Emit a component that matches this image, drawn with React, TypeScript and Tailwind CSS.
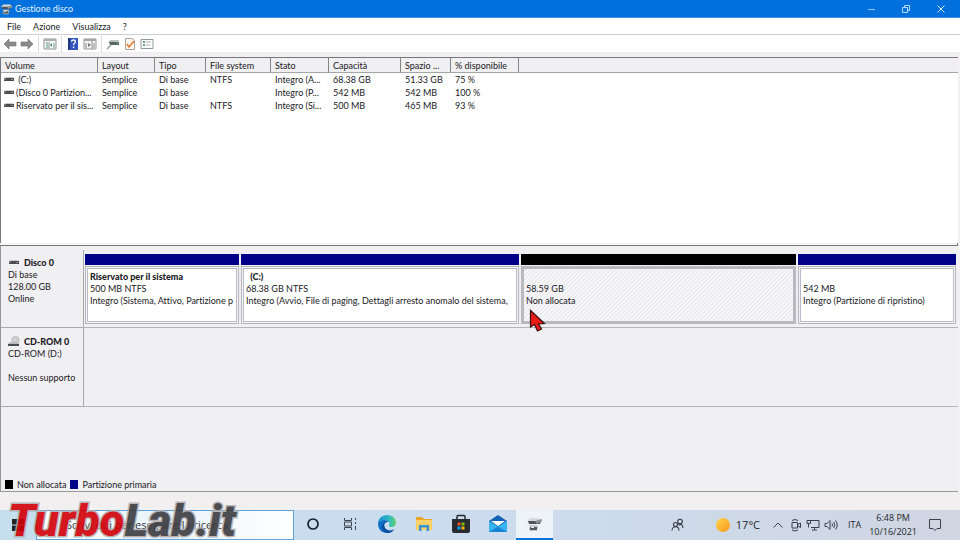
import { clsx } from "clsx";
import type { ReactNode } from "react";

interface Volume {
  name: string;
  fs: string;
  status: string;
  capacity: string;
  free: string;
  percent: string;
}

interface PartitionProps {
  title?: string;
  size: string;
  status: string;
  className: string;
  unallocated?: boolean;
}

const volumes: Volume[] = [
  { name: " (C:)", fs: "NTFS", status: "Integro (A...", capacity: "68.38 GB", free: "51.33 GB", percent: "75 %" },
  { name: "(Disco 0 Partizion...", fs: "", status: "Integro (P...", capacity: "542 MB", free: "542 MB", percent: "100 %" },
  { name: "Riservato per il sis...", fs: "NTFS", status: "Integro (Si...", capacity: "500 MB", free: "465 MB", percent: "93 %" },
];

const columns = [
  { label: "Volume", width: "w-[97px]" },
  { label: "Layout", width: "w-[57px]" },
  { label: "Tipo", width: "w-[51px]" },
  { label: "File system", width: "w-[65px]" },
  { label: "Stato", width: "w-[58px]" },
  { label: "Capacità", width: "w-[72px]" },
  { label: "Spazio ...", width: "w-[50px]" },
  { label: "% disponibile", width: "w-[68px]" },
];

function DriveIcon() {
  return (
    <svg className="h-2 w-3 shrink-0" viewBox="0 0 12 8" aria-hidden="true">
      <path d="M2 1h8l1 2H1z" fill="#c9c9cb" />
      <rect x="1" y="2" width="10" height="3" fill="#4b4b50" />
      <rect x="1" y="2" width="2" height="2" fill="#7a7a7e" />
      <rect x="8" y="3" width="2" height="1" fill="#8d9a93" />
    </svg>
  );
}

function CdIcon() {
  return (
    <svg className="h-3 w-3 shrink-0" viewBox="0 0 12 12" aria-hidden="true">
      <circle cx="7.500" cy="4" r="3.600" fill="#d8d8da" stroke="#a9a9ac" strokeWidth=".8" />
      <circle cx="7.500" cy="4" r="1.2" fill="#f4f4f4" stroke="#999" strokeWidth=".6" />
      <path d="M2 6h8l1 2H0z" fill="#bbb" />
      <rect y="8" width="11" height="2" fill="#4b4b50" />
    </svg>
  );
}

function DiskManagementIcon({ className }: { className?: string }) {
  return (
    <svg className={className} viewBox="0 0 16 16" aria-hidden="true">
      <path d="M3 2h9l3 3-2 2H2L0 5z" fill="#d7d9da" />
      <path d="M1 5h13l-1 3H2z" fill="#4d5358" />
      <path d="M8 5l7-2v2l-5 3z" fill="#8c9295" />
      <path d="M3 9h7l1 2-1 4H3L2 13z" fill="#c5c9cb" />
      <path d="M3 11h7v3H3z" fill="#51575b" />
      <path d="M4 11h3v1H4z" fill="#eee" />
    </svg>
  );
}

function ToolButton({ label, children }: { label: string; children: ReactNode }) {
  return (
    <button type="button" aria-label={label} className="flex h-4 w-[17px] items-center justify-center">
      <svg className="h-3 w-3.5" viewBox="0 0 14 12">
        {children}
      </svg>
    </button>
  );
}

function ToolSeparator() {
  return <span className="ml-[3px] mr-0.5 h-4 w-px bg-[#dcdcdc]" />;
}

function Toolbar() {
  return (
    <div className="flex h-[18px] items-center border-b border-[#eeeef0] bg-white pl-px">
      <ToolButton label="Indietro">
        <path d="M1 6l5-5v3h7v4H6v3z" fill="#8a8a8a" stroke="#6f6f6f" strokeWidth=".6" />
      </ToolButton>
      <ToolButton label="Avanti">
        <path d="M13 6L8 1v3H1v4h7v3z" fill="#8a8a8a" stroke="#6f6f6f" strokeWidth=".6" />
      </ToolButton>
      <ToolSeparator />
      <ToolButton label="Mostra struttura">
        <path d="M1 1h12v10H1z" fill="#f4f6f5" stroke="#8d9692" />
        <path d="M1 1h12v2H1z" fill="#a9b1ad" />
        <path d="M3 5h2M3 7h2M3 9h2" stroke="#5a9a8b" />
        <path d="M6 4v6M11 5v5" stroke="#87918d" />
        <path d="M7 7l2-2v4z" fill="#45927f" />
      </ToolButton>
      <ToolSeparator />
      <ToolButton label="Guida">
        <path d="M2 0h10v12H2z" fill="#3455bd" />
        <path d="M2 0h2v12H2z" fill="#203583" />
        <path d="M5.500 3.500c0-2 4-2 4 0 0 1.500-2 1.500-2 3.500M7.500 8.500V10" fill="none" stroke="#fff" strokeWidth="1.300" />
      </ToolButton>
      <ToolButton label="Mostra riquadro azioni">
        <path d="M1 1h12v10H1z" fill="#f3f3f3" stroke="#969696" />
        <path d="M1 1h12v2H1z" fill="#a6a6a6" />
        <path d="M9 3v8M3 5v5M11 5v5" stroke="#8c8c8c" />
        <path d="M5 5l3 2-3 2z" fill="#777" />
      </ToolButton>
      <ToolSeparator />
      <ToolButton label="Aggiorna">
        <path d="M4 2h9l-1 3H2z" fill="#bac0be" />
        <path d="M3 4h10v3H4z" fill="#56665f" />
        <path d="M5 7l-4 4" stroke="#929b97" strokeWidth="1.500" />
        <path d="M10 5h2" stroke="#58ae88" />
      </ToolButton>
      <ToolButton label="Proprietà">
        <path d="M2.500.5h7l2 2v9h-9z" fill="#fff5eb" stroke="#a9a39f" />
        <path d="M4 6l2 3 5-6" fill="none" stroke="#df7d34" strokeWidth="1.500" />
      </ToolButton>
      <ToolButton label="Elenco">
        <path d="M1 1.500h12v9H1z" fill="#fff" stroke="#8f9999" />
        <path d="M3 4h2M3 7h2" stroke="#377c76" strokeWidth="1.300" />
        <path d="M6 4h5M6 7h4" stroke="#a4adb0" />
      </ToolButton>
    </div>
  );
}

function VolumeTable() {
  return (
    <section className="h-[186px] overflow-hidden border-l border-t border-[#77777b] bg-white">
      <table className="w-full table-fixed border-separate border-spacing-0 text-left">
        <thead className="bg-[#f0eff1]">
          <tr className="h-[15px]">
            {columns.map((c) => (
              <th
                key={c.label}
                scope="col"
                className={clsx("border-b border-r border-b-[#a5a5a9] border-r-[#85858a] p-0 pl-1 pt-px font-normal leading-[13px]", c.width)}
              >
                {c.label}
              </th>
            ))}
            <td className="border-b border-[#a5a5a9] p-0" />
          </tr>
        </thead>
        <tbody>
          {volumes.map((v) => (
            <tr key={v.name} className="h-[13px] leading-[13px] whitespace-pre">
              <td className="p-0">
                <div className="flex items-center gap-px pl-0.5">
                  <DriveIcon />
                  {v.name}
                </div>
              </td>
              <td className="p-0 pl-1">Semplice</td>
              <td className="p-0 pl-1">Di base</td>
              <td className="p-0 pl-1">{v.fs}</td>
              <td className="p-0 pl-1">{v.status}</td>
              <td className="p-0 pl-1">{v.capacity}</td>
              <td className="p-0 pl-1">{v.free}</td>
              <td className="p-0 pl-1">{v.percent}</td>
            </tr>
          ))}
        </tbody>
      </table>
    </section>
  );
}

function Partition({ title, size, status, className, unallocated }: PartitionProps) {
  return (
    <div className={clsx("flex min-w-0 flex-col", className)}>
      <div className={clsx("h-[11px]", unallocated ? "bg-black" : "bg-[#000089]")} />
      <div
        className={clsx(
          "mt-px flex-1 whitespace-nowrap leading-3",
          unallocated
            ? "border-[3px] border-[#b9b9bf] bg-[repeating-linear-gradient(135deg,#f8f7fa_0px,#f8f7fa_1px,#e5e4e9_2px,#f8f7fa_3px)] pl-0.5 pt-0.5"
            : "border border-[#b5b5bd] bg-[#f4f3f6] p-px"
        )}
      >
        <div className={clsx("h-full overflow-hidden", !unallocated && "border border-[#b9bccb] bg-white pl-0.5 pt-0.5")}>
          <div className="h-3 whitespace-pre font-black">{title}</div>
          <div>{size}</div>
          <div>{status}</div>
        </div>
      </div>
    </div>
  );
}

function DiskPane() {
  return (
    <section className="flex flex-1 flex-col border-b border-l border-[#97979b] bg-[#f0eff2] pt-1">
      <div className="flex h-[78px]">
        <div className="w-[83px] shrink-0 border-b border-r border-[#a9a9ae] pl-[7px] pt-[7px] leading-3">
          <div className="flex items-center gap-1 font-black"><DriveIcon />Disco 0</div>
          <div>Di base</div>
          <div>128.00 GB</div>
          <div>Online</div>
        </div>
        <div className="flex min-w-0 flex-1 gap-0.5 border-b border-[#b4b4b9] pb-[3px] pl-px pr-0.5 pt-1">
          <Partition className="flex-[154]" title="Riservato per il sistema" size="500 MB NTFS" status="Integro (Sistema, Attivo, Partizione p" />
          <Partition className="flex-[278]" title="  (C:)" size="68.38 GB NTFS" status="Integro (Avvio, File di paging, Dettagli arresto anomalo del sistema," />
          <Partition className="flex-[275]" size="58.59 GB" status="Non allocata" unallocated />
          <Partition className="flex-[158]" size="542 MB" status="Integro (Partizione di ripristino)" />
        </div>
      </div>
      <div className="flex h-[79px]">
        <div className="w-[83px] shrink-0 border-b border-r border-[#a9a9ae] pl-[7px] pt-2 leading-3">
          <div className="flex items-center gap-1 font-black"><CdIcon />CD-ROM 0</div>
          <div>CD-ROM (D:)</div>
          <div className="mt-3">Nessun supporto</div>
        </div>
        <div className="flex-1 border-b border-[#b4b4b9]" />
      </div>
      <div className="mt-auto flex h-[13px] items-center gap-1 pl-1">
        <span className="h-[9px] w-2 bg-black" />
        Non allocata
        <span className="h-[9px] w-2 bg-[#000089]" />
        Partizione primaria
      </div>
    </section>
  );
}

function TaskButton({ label, active, children }: { label: string; active?: boolean; children: ReactNode }) {
  return (
    <button
      type="button"
      aria-label={label}
      className={clsx("flex w-[37px] items-center justify-center border-b-2", active ? "border-[#0875d8] bg-[#edf3f9]" : "border-transparent")}
    >
      {children}
    </button>
  );
}

function Taskbar() {
  return (
    <footer className="flex h-[30px] items-stretch bg-linear-to-r from-[#c5dfef] via-[#ccdcee] to-[#d0d6e2] font-['Open_Sans','Noto_Sans',sans-serif] text-[#23262c]">
      <button type="button" aria-label="Start" className="flex w-9 items-center justify-center">
        <svg className="h-3 w-3" viewBox="0 0 12 12" fill="#222">
          <path d="M0 0h5.500v5.500H0zM6.500 0H12v5.500H6.500zM0 6.500h5.500V12H0zM6.500 6.500H12V12H6.500z" />
        </svg>
      </button>
      <label className="flex w-[258px] items-center border border-[#5ba2db] bg-linear-to-r from-white via-[#e8f3fa] to-white pl-[29px]">
        <input
          aria-label="Cerca"
          placeholder="Scrivi qui per eseguire la ricerca"
          className="w-full bg-transparent text-[11px] leading-4 outline-none placeholder:text-[#333]"
        />
      </label>
      <TaskButton label="Cortana">
        <svg className="h-3.5 w-3.5" viewBox="0 0 14 14">
          <circle cx="7" cy="7" r="5" fill="none" stroke="#17202d" strokeWidth="1.700" />
        </svg>
      </TaskButton>
      <TaskButton label="Visualizzazione attività">
        <svg className="h-3.5 w-3.5" viewBox="0 0 14 14" fill="none" stroke="#3c4550">
          <path d="M1.500 1v2.500h7V1M1.500 13v-2.500h7V13M1.500 5v4M8.500 5v4M1.500 5h7v4h-7M12.500 1v2M12.500 5v2M12.500 9v4" />
        </svg>
      </TaskButton>
      <TaskButton label="Edge">
        <svg className="h-5 w-5" viewBox="0 0 20 20">
          <defs>
            <linearGradient id="edgeTop" x1="0" x2="1">
              <stop offset="0" stopColor="#168fd8" />
              <stop offset=".6" stopColor="#2eb9c4" />
              <stop offset="1" stopColor="#65d36c" />
            </linearGradient>
          </defs>
          <path d="M1 10C1 4.500 5 1 10 1c5.500 0 9 3.700 9 7.500 0 3-2 4.500-4.500 4.500-2 0-3-.8-2.500-1.800C13.500 8.500 11 6 7.500 6 4 6 1.500 8 1 10z" fill="url(#edgeTop)" />
          <path d="M1 10c.5-2.500 3.500-4 6.500-4 2 0 3.500.8 4.200 2C8 7.500 6.500 10 7.500 13c1 3 5 5 9.500 2.500C15.500 18 13 19 10 19c-5.500 0-9-4-9-9z" fill="#126fc6" />
          <path d="M11.700 8C8 7.500 6.500 10 7.500 13c1 3 5 5 9.500 2.500-1.500 2.500-4 3.500-7 3.500-3.500-1-6-4-5-7.500C5.700 8.700 9 7 11.700 8z" fill="#0c4e9c" />
        </svg>
      </TaskButton>
      <TaskButton label="Esplora file">
        <svg className="h-4 w-[18px]" viewBox="0 0 18 16">
          <path d="M1 1h6l2 2h8v4H1z" fill="#e8a52b" />
          <path d="M1 4h16v10H1z" fill="#fbd066" />
          <path d="M4 15V9h10v6h-2.500v-3.500h-5V15z" fill="#3d91d1" />
        </svg>
      </TaskButton>
      <TaskButton label="Microsoft Store">
        <svg className="h-5 w-5" viewBox="0 0 20 20">
          <path d="M6 6V2.500Q6 1.500 7 1.500h6q1 0 1 1V6" fill="none" stroke="#232a33" strokeWidth="1.500" />
          <path d="M1 5h18v12q0 2-2 2H3q-2 0-2-2z" fill="#282b30" />
          <path d="M6.500 8.500h3v3h-3z" fill="#f25022" />
          <path d="M10.500 8.500h3v3h-3z" fill="#7fba00" />
          <path d="M6.500 12.500h3v3h-3z" fill="#00a4ef" />
          <path d="M10.500 12.500h3v3h-3z" fill="#ffb900" />
        </svg>
      </TaskButton>
      <TaskButton label="Posta">
        <svg className="h-[18px] w-[18px]" viewBox="0 0 18 18">
          <path d="M0 6l9-6 9 6v11H0z" fill="#1263b5" />
          <path d="M0 6l9 5.500L18 6v11H0z" fill="#37b4f0" />
          <path d="M0 17l9-5.500L18 17z" fill="#1784d8" />
          <path d="M2 6h14l-7 5z" fill="#fff" />
        </svg>
      </TaskButton>
      <TaskButton label="Gestione disco" active>
        <DiskManagementIcon className="h-4 w-4" />
      </TaskButton>
      <div className="ml-auto flex items-center pr-[18px]">
        <button type="button" aria-label="Contatti" className="mr-[30px]">
          <svg className="h-3.5 w-3.5" viewBox="0 0 14 14" fill="none" stroke="#343b45" strokeWidth="1.100">
            <circle cx="4.500" cy="6.500" r="2" />
            <path d="M1 12.500c0-5 7-5 7 0" />
            <circle cx="9" cy="3.500" r="2.300" />
            <path d="M7.500 7c2-1.500 4.500 0 4.500 3" />
          </svg>
        </button>
        <button type="button" className="flex items-center gap-[5px] text-[11px]">
          <svg className="h-4 w-4" viewBox="0 0 16 16" aria-hidden="true">
            <defs>
              <linearGradient id="sun" x1="0" y1="0" x2="1" y2="1">
                <stop offset="0" stopColor="#ffd34c" />
                <stop offset="1" stopColor="#f89818" />
              </linearGradient>
            </defs>
            <circle cx="8" cy="8" r="7" fill="url(#sun)" />
          </svg>
          17°C
        </button>
        <button type="button" aria-label="Mostra icone nascoste" className="ml-3">
          <svg className="h-3 w-3" viewBox="0 0 12 12" fill="none" stroke="#3a414b">
            <path d="M1.500 8.500L6 4l4.500 4.500" />
          </svg>
        </button>
        <svg className="ml-1.5 h-3.5 w-3" viewBox="0 0 12 14" fill="none" stroke="#3a414b" aria-hidden="true">
          <path d="M2 4.500h5.500v5.500H2zM8 6.500l2.500-1.500v4.500L8 8M2 2.500q3-2 6 0M2 12q3 2 6 0" />
        </svg>
        <svg className="ml-1 h-3.5 w-3.5" viewBox="0 0 14 14" fill="none" stroke="#3a414b" aria-hidden="true">
          <path d="M4 2.500h9v7H5M8.500 9.500v2M6 12h5M1 2.500h3.500v3H1zM2.500 5.500v4" />
        </svg>
        <svg className="ml-1 h-3.5 w-3.5" viewBox="0 0 14 14" fill="none" stroke="#3a414b" aria-hidden="true">
          <path d="M1 5.500h2l3-3v9l-3-3H1zM8 5.500q1.200 1.500 0 3M9.700 4q2.300 3 0 6M11.500 2.500q3.500 4.500 0 9" />
        </svg>
        <span className="ml-2.5 text-[9px]">ITA</span>
        <div className="ml-2 text-center text-[9px] leading-[14px]">
          <div>6:48 PM</div>
          <div>10/16/2021</div>
        </div>
        <button type="button" aria-label="Notifiche" className="ml-[11px]">
          <svg className="h-3.5 w-3.5" viewBox="0 0 14 14" fill="none" stroke="#3a414b">
            <path d="M1.500 1.500h11v9H9L7 12.500 5 10.500H1.500z" />
          </svg>
        </button>
      </div>
    </footer>
  );
}

export default function App() {
  return (
    <div className="relative flex min-h-screen flex-col overflow-hidden bg-[#f2f0f2] font-['Lato','Open_Sans',sans-serif] text-[9px] text-[#202024] [font-variant-ligatures:none]">
      <header className="flex h-[18px] items-center border-b border-[#3a93e6] bg-[#0070dc] pl-px text-[#e4f1ff]">
        <DiskManagementIcon className="h-3 w-3" />
        <h1 className="ml-0.5 pt-px">Gestione disco</h1>
        <div className="ml-auto flex items-center gap-[21px] pr-3">
          <button type="button" aria-label="Riduci a icona">
            <svg className="h-3.5 w-3.5" viewBox="0 0 14 14" stroke="#8bc6ff"><path d="M4 7.500h7" /></svg>
          </button>
          <button type="button" aria-label="Ripristina">
            <svg className="h-3.5 w-3.5" viewBox="0 0 14 14" fill="none" stroke="#b5dbff">
              <path d="M3.500 5.500h5v5h-5zM5.500 5V3.500h5v5H9" />
            </svg>
          </button>
          <button type="button" aria-label="Chiudi">
            <svg className="h-3.5 w-3.5" viewBox="0 0 14 14" stroke="#d3eaff"><path d="M3.500 3.500l7 7M10.500 3.500l-7 7" /></svg>
          </button>
        </div>
      </header>

      <nav className="flex h-[17px] items-center gap-3 border-b border-[#cfcfd1] bg-white pl-[7px] pt-px">
        <button type="button">File</button>
        <button type="button">Azione</button>
        <button type="button">Visualizza</button>
        <button type="button">?</button>
      </nav>
      <Toolbar />

      <main className="mr-0.5 flex flex-1 flex-col pt-1">
        <VolumeTable />
        <div className="h-[3px] shrink-0 border-b border-r border-[#77777b] bg-[#f5f4f6]" />
        <DiskPane />
      </main>
      <div className="h-[18px] bg-[#f2eff1]" />
      <Taskbar />

      {/* Mouse pointer */}
      <svg className="absolute left-[529px] top-[309px] h-[23px] w-[18px]" viewBox="0 0 18 23" aria-hidden="true">
        <path d="M1.500 1.500v16.500l4-2.500 3 6.500 4-2-3-5 6-.5z" fill="#ea1c18" stroke="#37100f" strokeWidth="1.200" />
      </svg>

      {/* Site watermark */}
      <div className="pointer-events-none absolute bottom-0 left-2 whitespace-nowrap font-['Roboto',sans-serif] text-[45px] font-black italic leading-[38px] opacity-90 [-webkit-text-stroke:3px_#b3afb3] [paint-order:stroke_fill]">
        <span className="text-[#d20008]">Turbo</span>
        <span className="text-[#3c3c40]">Lab.it</span>
      </div>
    </div>
  );
}
